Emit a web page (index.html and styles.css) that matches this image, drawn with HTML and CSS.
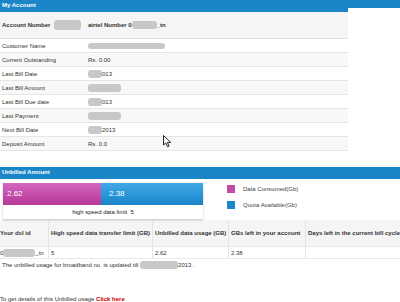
FILE: index.html
```html
<!DOCTYPE html>
<html lang="en">
<head>
    <meta charset="UTF-8">
    <title>My Account</title>
    <link rel="stylesheet" href="styles.css">
</head>
<body>
    <div class="top">
        <div class="account">
            <h2 class="bar">My Account</h2>
            <div class="info">
                <div class="row head">
                    <span>Account Number <i class="mask mask-acc"></i></span>
                    <span>airtel Number 0<i class="mask mask-num"></i>_tn</span>
                </div>
                <div class="row"><span>Customer Name</span><span><i class="mask mask-name"></i></span></div>
                <div class="row"><span>Current Outstanding</span><span>Rs. 0.00</span></div>
                <div class="row"><span>Last Bill Date</span><span><i class="mask mask-s"></i>013</span></div>
                <div class="row"><span>Last Bill Amount</span><span><i class="mask mask-l"></i></span></div>
                <div class="row"><span>Last Bill Due date</span><span><i class="mask mask-s"></i>013</span></div>
                <div class="row"><span>Last Payment</span><span><i class="mask mask-l"></i></span></div>
                <div class="row"><span>Next Bill Date</span><span><i class="mask mask-s"></i>2013</span></div>
                <div class="row"><span>Deposit Amount</span><span>Rs. 0.0</span></div>
            </div>
        </div>
        <div class="side"></div>
    </div>

    <div class="unbilled">
        <h2 class="bar">Unbilled Amount</h2>
        <div class="chart-row">
            <div class="chart">
                <div class="meter">
                    <div class="used" style="width: 98px">2.62</div>
                    <div class="left">2.38</div>
                </div>
                <div class="limit">high speed data limit &nbsp;5</div>
            </div>
            <ul class="legend">
                <li><span class="key key-used"></span>Data Consumed(Gb)</li>
                <li><span class="key key-left"></span>Quota Available(Gb)</li>
            </ul>
        </div>

        <div class="usage">
            <div class="urow uhead">
                <span>Your dsl id</span>
                <span>High speed data transfer limit (GB)</span>
                <span>Unbilled data usage (GB)</span>
                <span>GBs left in your account</span>
                <span>Days left in the current bill cycle</span>
            </div>
            <div class="urow">
                <span>0<i class="mask mask-dsl"></i>_tn</span>
                <span>5</span>
                <span>2.62</span>
                <span>2.38</span>
                <span></span>
            </div>
        </div>
        <p class="note">The unbilled usage for broadband no &nbsp;is updated till <i class="mask mask-date"></i>2013 .</p>
        <p class="details">To get details of this Unbilled usage <a href="#">Click here</a></p>
    </div>

    <svg class="cursor" width="9" height="13" viewBox="0 0 9 13">
        <path d="M0.5 0.5 L0.5 10 L2.8 7.9 L4.5 11.8 L6 11.1 L4.4 7.4 L7.6 7.4 Z" fill="#fff" stroke="#111" stroke-width="0.9" stroke-linejoin="round"/>
    </svg>
</body>
</html>
```

FILE: styles.css
```css
body {
    margin: 0;
    font-family: "Liberation Sans", Arial, sans-serif;
    font-size: 6px;
    color: #333;
    background: #fff;
    position: relative;
    overflow: hidden;
}

.top {
    display: flex;
}

.account {
    width: 348px;
}

.side {
    width: 52px;
    height: 8px;
    background: #1b86c7;
}

.bar {
    margin: 0;
    height: 12px;
    line-height: 10px;
    padding-left: 2px;
    font-size: 6px;
    font-weight: bold;
    color: #fff;
    background: #1b86c7;
}

.row {
    display: grid;
    grid-template-columns: 86px 1fr;
    align-items: center;
    height: 14px;
    padding-left: 2px;
    box-sizing: border-box;
    border-bottom: 1px solid #e6e6e6;
}

.row:nth-child(odd) {
    background: #f8f8f8;
}

.row.head {
    height: 27px;
    font-weight: bold;
    background: #f5f5f5;
    border-bottom: 1px solid #e0e0e0;
}

.mask {
    display: inline-block;
    height: 8px;
    background: #c8c8c8;
    border-radius: 3px;
    vertical-align: middle;
}

.mask-acc { width: 27px; margin-left: 2px; height: 10px; }
.mask-num { width: 25px; }
.mask-name { width: 77px; height: 6px; }
.mask-s { width: 14px; }
.mask-l { width: 33px; }
.mask-dsl { width: 32px; }
.mask-date { width: 38px; }

.unbilled {
    margin-top: 16px;
}

.chart-row {
    display: flex;
    align-items: flex-start;
    margin-top: 4px;
}

.chart {
    width: 200px;
    margin-left: 3px;
    box-shadow: 0 1px 2px rgba(0, 0, 0, 0.25);
}

.meter {
    display: flex;
    height: 22px;
    font-size: 8px;
    color: #fff;
    line-height: 22px;
}

.used {
    padding-left: 4px;
    box-sizing: border-box;
    background: linear-gradient(#d467c0, #c24aa6 60%, #b53c98);
}

.left {
    flex: 1;
    padding-left: 8px;
    background: linear-gradient(#42a7e6, #2794d8 60%, #1b82c4);
}

.limit {
    height: 14px;
    line-height: 15px;
    text-align: center;
    color: #222;
    background: #fff;
}

.legend {
    list-style: none;
    margin: 2px 0 0 24px;
    padding: 0;
}

.legend li {
    display: flex;
    align-items: center;
    gap: 8px;
    height: 8px;
    margin-bottom: 8px;
    color: #444;
}

.key {
    width: 8px;
    height: 8px;
}

.key-used { background: #c44aa8; }
.key-left { background: #1c86c8; }

.usage {
    margin-top: 1px;
}

.urow {
    display: grid;
    grid-template-columns: 48px 104px 76px 77px 95px;
    height: 11px;
    align-items: center;
    border-bottom: 1px solid #e8e8e8;
}

.urow span {
    height: 100%;
    display: flex;
    align-items: center;
    padding-left: 2px;
    white-space: nowrap;
    overflow: hidden;
    border-left: 1px solid #e4e4e4;
}

.urow span:first-child {
    border-left: none;
    padding-left: 0;
}

.uhead {
    height: 26px;
    font-weight: bold;
    background: #f5f5f5;
}

.note {
    margin: 2px 0 0 2px;
    line-height: 8px;
}

.details {
    margin: 26px 0 0 0;
    line-height: 8px;
}

.details a {
    color: #cc0000;
    font-weight: bold;
    text-decoration: underline;
}

.cursor {
    position: absolute;
    left: 163px;
    top: 135px;
}
```
